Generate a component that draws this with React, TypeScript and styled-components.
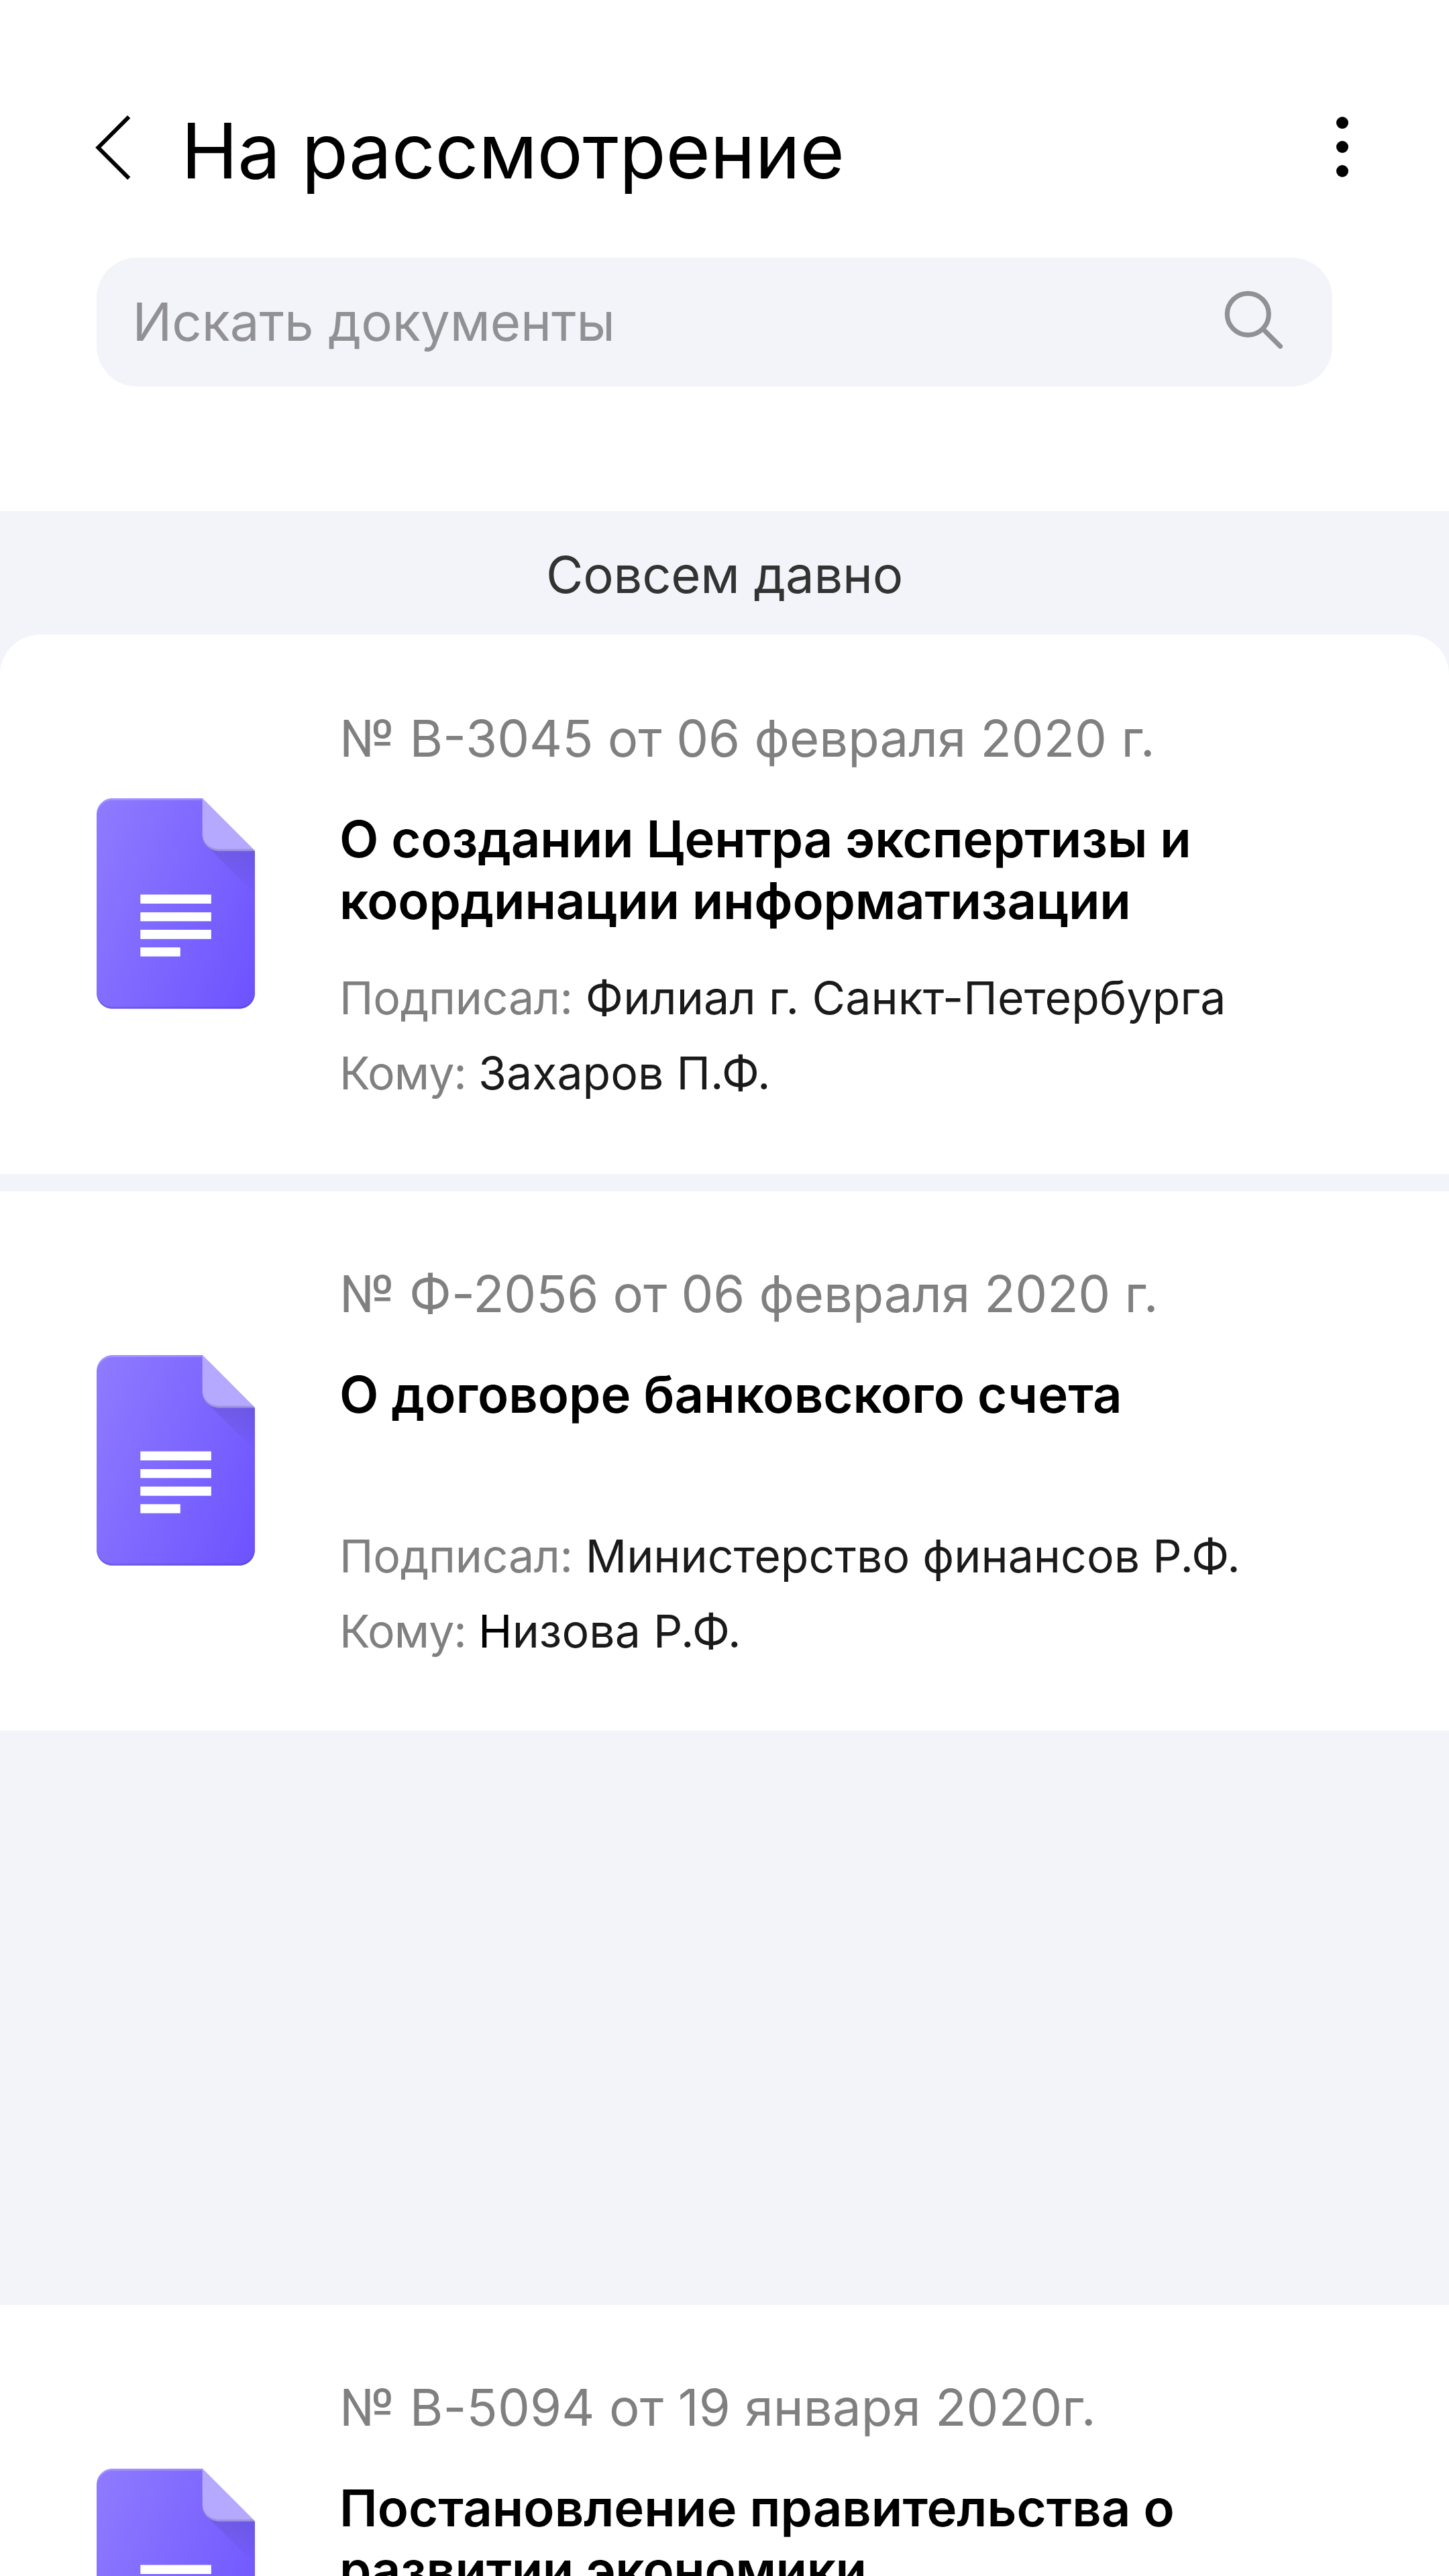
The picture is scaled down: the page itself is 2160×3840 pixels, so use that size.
import React, { useId } from "react";
import styled, { createGlobalStyle } from "styled-components";

const color = {
  surface: "#f3f4f9",
  white: "#ffffff",
  black: "#000000",
  text: "#1a1a1a",
  section: "#333333",
  muted: "#808080",
  placeholder: "#919095",
};

const GlobalStyle = createGlobalStyle`
  *, *::before, *::after { box-sizing: border-box; }
  html, body { margin: 0; padding: 0; background: ${color.surface}; }
  body { overflow: hidden; }
`;

const Screen = styled.main`
  display: flex;
  flex-direction: column;
  width: 2160px;
  height: 3840px;
  overflow: hidden;
  background: ${color.surface};
  font-family: Inter, "Noto Sans", sans-serif;
  color: ${color.text};
`;

const Header = styled.header`
  display: flex;
  flex-direction: column;
  flex: none;
  gap: 90px;
  height: 762px;
  padding: 156px 141px 0 138px;
  background: ${color.white};
`;

const TitleBar = styled.div`
  display: flex;
  align-items: flex-start;
  height: 138px;
`;

const IconButton = styled.button`
  display: flex;
  flex: none;
  margin: 10px 0 0;
  padding: 0;
  border: 0;
  background: none;
  color: ${color.black};
`;

const Title = styled.h1`
  flex: 1;
  margin: 0 0 0 72px;
  font-size: 114px;
  font-weight: 400;
  line-height: 138px;
  letter-spacing: -0.4px;
  color: ${color.black};
`;

const SearchBox = styled.div`
  display: flex;
  justify-content: space-between;
  align-items: flex-start;
  width: 1842px;
  height: 192px;
  margin-left: 6px;
  padding: 48px 66px 0 53.5px;
  border-radius: 60px;
  background: ${color.surface};
  color: ${color.placeholder};
`;

const Placeholder = styled.span`
  font-size: 78px;
  line-height: 95px;
  letter-spacing: -0.1px;
`;

const SectionTitle = styled.h2`
  flex: none;
  height: 184px;
  margin: 0;
  padding-top: 48px;
  font-size: 76px;
  font-weight: 400;
  line-height: 92px;
  letter-spacing: -0.3px;
  text-align: center;
  color: ${color.section};
`;

const List = styled.section`
  display: flex;
  flex-direction: column;
  flex: none;
`;

const Card = styled.article<{ $first?: boolean; $before: number }>`
  display: flex;
  flex: none;
  height: 804px;
  margin-top: ${(p) => p.$before}px;
  padding-left: 144px;
  border-radius: ${(p) => (p.$first ? "60px 60px 0 0" : "0")};
  background: ${color.white};
`;

const IconSlot = styled.div`
  flex: none;
  width: 362px;
  padding-top: 244px;
`;

const Info = styled.div<{ $top: number }>`
  display: flex;
  flex-direction: column;
  padding-top: ${(p) => p.$top}px;
`;

const Number = styled.p<{ $tracking: number }>`
  margin: 0 0 58px;
  font-size: 76px;
  line-height: 92px;
  letter-spacing: ${(p) => p.$tracking}px;
  color: ${color.muted};
`;

const Subject = styled.h3<{ $gap: number }>`
  width: 1400px;
  min-height: 184px;
  margin: 0 0 ${(p) => p.$gap}px;
  font-size: 76px;
  font-weight: 600;
  line-height: 92px;
  color: ${color.black};
`;

const SubjectLine = styled.span<{ $tracking: number }>`
  display: block;
  letter-spacing: ${(p) => p.$tracking}px;
`;

const Field = styled.p`
  margin: 0;
  font-size: 68px;
  line-height: 112px;
  white-space: pre;
`;

const Label = styled.span<{ $tracking: number }>`
  letter-spacing: ${(p) => p.$tracking}px;
  color: ${color.muted};
`;

const Value = styled.span<{ $tracking?: number }>`
  letter-spacing: ${(p) => p.$tracking ?? 0}px;
`;

const Initial = styled.span`
  color: ${color.black};
`;

function BackIcon() {
  return (
    <svg width="60" height="108" viewBox="0 0 60 108" fill="none" aria-hidden="true">
      <path d="M54.2 8.2 8.4 54l45.8 45.8" stroke="currentColor" strokeWidth="6" />
    </svg>
  );
}

function MoreIcon() {
  return (
    <svg width="36" height="108" viewBox="0 0 36 108" fill="currentColor" aria-hidden="true">
      <circle cx="18" cy="17" r="9" />
      <circle cx="18" cy="53" r="9" />
      <circle cx="18" cy="89" r="9" />
    </svg>
  );
}

function SearchIcon() {
  return (
    <svg width="96" height="96" viewBox="0 0 96 96" fill="none" stroke="currentColor" strokeWidth="7.2" aria-hidden="true">
      <circle cx="36.3" cy="36.3" r="31" />
      <path d="M59 58.8 84.5 84.3" strokeLinecap="round" />
    </svg>
  );
}

function DocumentIcon() {
  const id = useId();
  const body =
    "M157.7 0H23.6C10.6 0 0 10.6 0 23.6V290.2C0 303.2 10.6 313.8 23.6 313.8H212.4C225.4 313.8 236 303.2 236 290.2V78.4Z";
  return (
    <svg width="236" height="314" viewBox="0 0 236 314" aria-hidden="true">
      <defs>
        <linearGradient id={`${id}b`} gradientUnits="userSpaceOnUse" x1="0" y1="0" x2="312" y2="128">
          <stop offset="0" stopColor="#8f7bff" />
          <stop offset="0.5" stopColor="#7d67ff" />
          <stop offset="1" stopColor="#6c52ff" />
        </linearGradient>
        <linearGradient id={`${id}s`} gradientUnits="userSpaceOnUse" x1="202" y1="72" x2="202" y2="142">
          <stop offset="0" stopColor="#3f3a78" stopOpacity="0.2" />
          <stop offset="1" stopColor="#3f3a78" stopOpacity="0.02" />
        </linearGradient>
        <clipPath id={`${id}c`}>
          <path d={body} />
        </clipPath>
      </defs>
      <path d={body} fill={`url(#${id}b)`} />
      <g clipPath={`url(#${id}c)`}>
        <path d="M164.6 71.4 236 142V78.4H181Z" fill={`url(#${id}s)`} />
        <path d="M0 0H157.7V3H23.6C10.6 3 0 13.6 0 26.6Z" fill="#fff" fillOpacity="0.2" />
        <path d="M0 287.2C0 300.2 10.6 310.8 23.6 310.8H212.4C225.4 310.8 236 300.2 236 287.2V314H0Z" fill="#1a237e" fillOpacity="0.18" />
      </g>
      <path d="M157.7 0V54.8C157.7 67.8 168.3 78.4 181.3 78.4H236Z" fill="#b5a9ff" />
      <path d="M157.7 51.8V54.8C157.7 67.8 168.3 78.4 181.3 78.4H236L233 75.4H181.3C168.3 75.4 157.7 64.8 157.7 51.8Z" fill="#4a4a70" fillOpacity="0.22" />
      <path
        d="M65.3 143.5h105.5v13.6H65.3ZM65.3 169.9h105.5v13.4H65.3ZM65.3 196.1h105.5v13.6H65.3ZM65.3 222.2h59.5v13.6H65.3Z"
        fill="#fff"
      />
    </svg>
  );
}

type Line = { text: string; tracking: number };

type Doc = {
  number: Line;
  subject: Line[];
  signer?: Line;
  recipient?: React.ReactNode;
  before: number;
};

const docs: Doc[] = [
  {
    number: { text: "№ В-3045 от 06 февраля 2020 г.", tracking: 0 },
    subject: [
      { text: "О создании Центра экспертизы и", tracking: -0.15 },
      { text: "координации информатизации", tracking: -0.24 },
    ],
    signer: { text: "Филиал г. Санкт-Петербурга", tracking: 0.13 },
    recipient: "Захаров П.Ф.",
    before: 0,
  },
  {
    number: { text: "№ Ф-2056 от 06 февраля 2020 г.", tracking: -0.14 },
    subject: [{ text: "О договоре банковского счета", tracking: 0.01 }],
    signer: { text: "Министерство финансов Р.Ф.", tracking: 0 },
    recipient: <><Initial>Н</Initial>изова Р.Ф.</>,
    before: 26,
  },
  {
    number: { text: "№ В-5094 от 19 января 2020г.", tracking: 0.13 },
    subject: [
      { text: "Постановление правительства о", tracking: 0.01 },
      { text: "развитии экономики", tracking: -0.4 },
    ],
    before: 856,
  },
];

export default function App() {
  return (
    <>
      <GlobalStyle />
      <Screen>
        <Header>
          <TitleBar>
            <IconButton aria-label="Назад"><BackIcon /></IconButton>
            <Title>На рассмотрение</Title>
            <IconButton aria-label="Меню"><MoreIcon /></IconButton>
          </TitleBar>
          <SearchBox>
            <Placeholder>Искать документы</Placeholder>
            <SearchIcon />
          </SearchBox>
        </Header>
        <SectionTitle>Совсем давно</SectionTitle>
        <List>
          {docs.map((doc, i) => (
            <Card key={doc.number.text} $first={i === 0} $before={doc.before}>
              <IconSlot><DocumentIcon /></IconSlot>
              <Info $top={i === 0 ? 108 : 106}>
                <Number $tracking={doc.number.tracking}>{doc.number.text}</Number>
                <Subject $gap={i === 0 ? 43 : 47}>
                  {doc.subject.map((line) => (
                    <SubjectLine key={line.text} $tracking={line.tracking}>{line.text}</SubjectLine>
                  ))}
                </Subject>
                {doc.signer && (
                  <>
                    <Field>
                      <Label $tracking={-0.3}>Подписал: </Label>
                      <Value $tracking={doc.signer.tracking}>{doc.signer.text}</Value>
                    </Field>
                    <Field>
                      <Label $tracking={-1}>Кому: </Label>
                      <Value>{doc.recipient}</Value>
                    </Field>
                  </>
                )}
              </Info>
            </Card>
          ))}
        </List>
      </Screen>
    </>
  );
}
